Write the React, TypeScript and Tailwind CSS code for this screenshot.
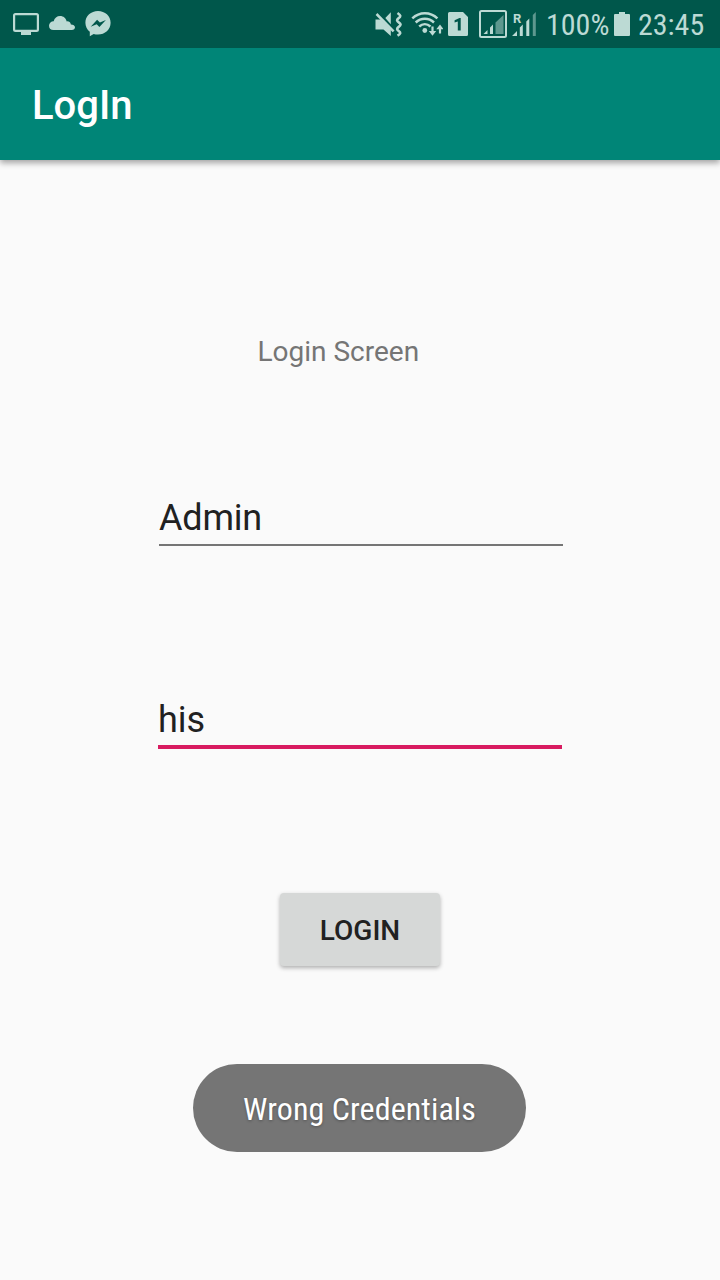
const ink = "#bcdad4";

function ScreenIcon() {
  return (
    <svg className="h-[24px] w-[26px]" viewBox="0 0 26 24" fill={ink}>
      <path fillRule="evenodd" d="M2.500 1h21A2.500 2.500 0 0 1 26 3.500v14a2.500 2.500 0 0 1-2.500 2.500H18v3H8v-3H2.500A2.500 2.500 0 0 1 0 17.500v-14A2.500 2.500 0 0 1 2.500 1zM2.200 3.300v14.400h21.600V3.300z" />
    </svg>
  );
}

function CloudIcon() {
  return (
    <svg className="h-[24px] w-[26px]" viewBox="0 0 26 24" fill={ink}>
      <path d="M4.700 18A4.600 4.600 0 0 1 0 13.700a4.600 4.600 0 0 1 4.700-4.500C5.400 6 8 4 11.100 4c3.300 0 5.900 2.100 6.600 5.400 2.200-.3 3.700 1 4.200 3 2.300 0 4.100 1.200 4.100 2.900 0 1.600-1.300 2.700-3.200 2.700z" />
    </svg>
  );
}

function MessengerIcon() {
  return (
    <svg className="h-[26px] w-[26px]" viewBox="0 0 26 26" fill={ink}>
      <path fillRule="evenodd" d="M13 0c7 0 12.600 5 12.600 11.800S20 23.600 13 23.600c-1.500 0-3-.2-4.300-.7L4.800 25.200v-4.400C2 18.600.4 15.400.4 11.800.4 5 6 0 13 0zM5.700 15.800l6-2.600 2.700 2.700 6.500-7-6 2.600-2.800-2.700z" />
    </svg>
  );
}

function MuteIcon() {
  return (
    <svg className="h-[28px] w-[27px]" viewBox="0 0 27 28" fill={ink}>
      <path d="M.5 9.500h5.500l9.800 9.800V26l-7.300-6.500h-8zM15.800 2.300v12L10.300 8z" />
      <path d="M1.500 4L18.600 21.300" stroke={ink} strokeWidth="2.500" fill="none" />
      <path d="M22.500 3c3.500 2.300 3.500 3.300 1 5.300-2 1.700-2 2.700.5 4.300 2.200 1.500 2 2.600-.3 4.300-2.200 1.700-2 2.700.3 4.300 2 1.600 1.500 2.700-1.500 4.500" stroke={ink} strokeWidth="2.600" fill="none" />
    </svg>
  );
}

function WifiIcon() {
  return (
    <svg className="h-[28px] w-[32px]" viewBox="0 0 32 28" fill="none" stroke={ink} strokeWidth="2.500">
      <path d="M1.300 8.300C8.500 1.400 19.200 1.400 26.400 8.300M4.700 12.500c5.300-5 13-5 18.300 0M8.200 16.500c3.400-3 7.800-3 11.300 0" />
      <circle cx="13.800" cy="20.500" r="2.400" fill={ink} stroke="none" />
      <path d="M21.500 16.500v7M29 23.500v-6" strokeWidth="2.200" />
      <path d="M17.800 21h7.400l-3.700 4.800zM25.300 19.300h7.400L29 14.500z" fill={ink} stroke="none" />
    </svg>
  );
}

function SimIcon() {
  return (
    <svg className="h-[24px] w-[20px]" viewBox="0 0 20 24" fill={ink}>
      <path fillRule="evenodd" d="M1.500 0H15l5 5v17.500a1.500 1.500 0 0 1-1.500 1.500h-17A1.500 1.500 0 0 1 0 22.500v-21A1.500 1.500 0 0 1 1.500 0zM11.500 6L6.600 8.200v2.400l3.200-1.100V18.500h2.900V6z" />
    </svg>
  );
}

function BoxedSignalIcon() {
  return (
    <svg className="h-[28px] w-[28px]" viewBox="0 0 28 28" fill={ink}>
      <rect x="1" y="1" width="26" height="26" rx="1.500" fill="none" stroke={ink} strokeWidth="2" />
      <path d="M4.500 24l4-4v4zM11 17.500l3-3V24h-3z" />
      <path d="M16.500 12.500L24.500 5v19h-8z" opacity=".5" />
    </svg>
  );
}

function RoamingSignalIcon() {
  return (
    <div className="relative h-[28px] w-[24px]">
      <svg className="h-[28px] w-[24px]" viewBox="0 0 24 28" fill={ink}>
        <path d="M0 26l5-5V26zM7.800 17.500l3-3V26h-3zM14.300 11.500l3-3V26h-3z" />
        <path d="M20.800 5l3-3v24h-3z" opacity=".5" />
      </svg>
      <span className="absolute top-[2px] left-px text-[13px] leading-[13px] font-bold">R</span>
    </div>
  );
}

function StatusBar() {
  return (
    <header className="flex h-12 items-center bg-[#00574b] pr-[15px] pl-[13px] text-[#bcdad4]">
      <ScreenIcon />
      <div className="ml-[10px]"><CloudIcon /></div>
      <div className="ml-[10px]"><MessengerIcon /></div>
      <div className="ml-[264px]"><MuteIcon /></div>
      <div className="ml-[9px]"><WifiIcon /></div>
      <div className="ml-[5px]"><SimIcon /></div>
      <div className="ml-[11px]"><BoxedSignalIcon /></div>
      <div className="ml-[5px]"><RoamingSignalIcon /></div>
      <span className="ml-[10px] w-[62px] pt-[2px] font-['Roboto_Condensed',Roboto,sans-serif] text-[30px] leading-[36px] whitespace-nowrap [font-stretch:75%]">100%</span>
      <svg className="ml-[6px] h-[24px] w-[16px] shrink-0" viewBox="0 0 16 24" fill={ink}>
        <path d="M5 0h6v2h4q1 0 1 1v20q0 1-1 1H1q-1 0-1-1V3q0-1 1-1h4z" />
      </svg>
      <span className="ml-[8px] pt-[2px] font-['Roboto_Condensed',Roboto,sans-serif] text-[30px] leading-[36px] whitespace-nowrap [font-stretch:75%]">23:45</span>
    </header>
  );
}

export default function App() {
  return (
    <div className="flex h-[1280px] w-[720px] flex-col overflow-hidden bg-[#fafafa] font-['Roboto',sans-serif] text-[#212121]">
      <StatusBar />
      <div className="flex h-28 shrink-0 items-center bg-[#008577] pt-[4px] pl-8 shadow-[0_3px_6px_rgba(0,0,0,0.35)] [clip-path:inset(0_0_-12px_0)]">
        <h1 className="text-[40px] leading-[48px] font-medium text-white">LogIn</h1>
      </div>
      <main className="flex flex-col">
        <p className="mt-[176px] ml-[257.500px] text-[28px] leading-[32px] text-[#757575]">Login Screen</p>
        <div className="mt-[128px] ml-[159px] h-[50px] w-[404px] border-b-2 border-[#757575] pt-px text-[36px] leading-[42px] tracking-[-0.2px]">Admin</div>
        <div className="mt-[152px] ml-[158px] h-[51px] w-[404px] border-b-4 border-[#d81b60] pt-px text-[36px] leading-[42px]">his</div>
        <button className="mt-[144px] ml-[280px] h-[73px] w-[160px] rounded-[4px] bg-[#d6d8d7] pt-[3px] text-[28px] leading-[32px] font-medium shadow-[0_2px_4px_rgba(0,0,0,0.3)]">LOGIN</button>
        <div className="mt-[98px] ml-[193px] flex h-[88px] w-[333px] items-center justify-center rounded-full bg-[#757575] pt-[2px] font-['Roboto_Condensed',Roboto,sans-serif] text-[32px] tracking-[0.1px] text-white [font-stretch:75%] [text-shadow:0_1px_3px_rgba(0,0,0,0.3)]">
          <span className="whitespace-nowrap">Wrong Credentials</span>
        </div>
      </main>
    </div>
  );
}
